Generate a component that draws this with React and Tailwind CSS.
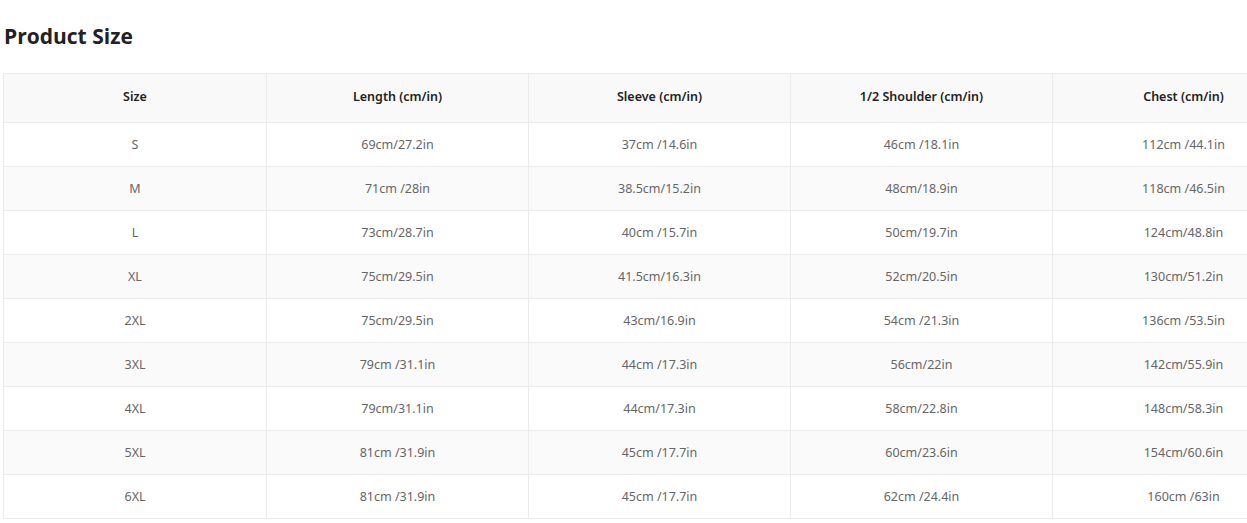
import React from "react";

const headers = ["Size", "Length (cm/in)", "Sleeve (cm/in)", "1/2 Shoulder (cm/in)", "Chest (cm/in)"];

const rows = [
  ["S", "69cm/27.2in", "37cm /14.6in", "46cm /18.1in", "112cm /44.1in"],
  ["M", "71cm /28in", "38.5cm/15.2in", "48cm/18.9in", "118cm /46.5in"],
  ["L", "73cm/28.7in", "40cm /15.7in", "50cm/19.7in", "124cm/48.8in"],
  ["XL", "75cm/29.5in", "41.5cm/16.3in", "52cm/20.5in", "130cm/51.2in"],
  ["2XL", "75cm/29.5in", "43cm/16.9in", "54cm /21.3in", "136cm /53.5in"],
  ["3XL", "79cm /31.1in", "44cm /17.3in", "56cm/22in", "142cm/55.9in"],
  ["4XL", "79cm/31.1in", "44cm/17.3in", "58cm/22.8in", "148cm/58.3in"],
  ["5XL", "81cm /31.9in", "45cm /17.7in", "60cm/23.6in", "154cm/60.6in"],
  ["6XL", "81cm /31.9in", "45cm /17.7in", "62cm /24.4in", "160cm /63in"],
];

export default function App() {
  return (
    <div className="w-full h-[523px] overflow-hidden bg-white" style={{ fontFamily: '"Noto Sans", "Open Sans", sans-serif' }}>
      <h2 className="pl-[4px] pt-[22px] h-[73px] text-[21px] leading-[28px] font-bold text-[#222] font-['Open_Sans',sans-serif]">
        Product Size
      </h2>
      <div className="pl-[3px]">
        <table className="table-fixed border-collapse w-[1311px]">
          <colgroup>
            <col className="w-[263px]" />
            <col className="w-[262px]" />
            <col className="w-[262px]" />
            <col className="w-[262px]" />
            <col className="w-[262px]" />
          </colgroup>
          <thead>
            <tr className="bg-[#f9f9f9] h-[49px]">
              {headers.map((h) => (
                <th key={h} className="border border-[#ebebeb] pb-[1px] text-[12.5px] font-semibold text-[#222] text-center align-middle">
                  {h}
                </th>
              ))}
            </tr>
          </thead>
          <tbody>
            {rows.map((r, i) => (
              <tr key={r[0]} className={`h-[44px] ${i % 2 === 1 ? "bg-[#fafafa]" : "bg-white"}`}>
                {r.map((c, j) => (
                  <td key={j} className="border border-[#ebebeb] pt-[2px] text-[12.5px] text-[#666] text-center align-middle">
                    {c}
                  </td>
                ))}
              </tr>
            ))}
          </tbody>
        </table>
      </div>
    </div>
  );
}
